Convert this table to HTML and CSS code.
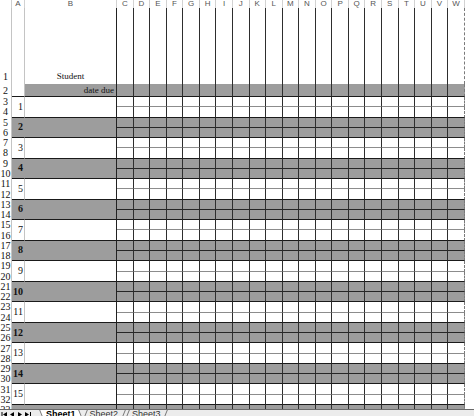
FILE: index.html
```html
<!DOCTYPE html>
<html lang="en">
<head>
<meta charset="utf-8">
<title>Gradebook</title>
<link rel="stylesheet" href="styles.css">
</head>
<body>
<div class="app">
  <div class="sheet" id="sheet"></div>
  <div class="tabbar">
    <div class="nav">
      <svg width="34" height="7" viewBox="0 0 34 7">
        <path d="M1 1v5" stroke="#000" stroke-width="1"/>
        <path d="M6 1 2 3.5 6 6z" fill="#000"/>
        <path d="M13 1 9 3.5 13 6z" fill="#000"/>
        <path d="M17 1 21 3.5 17 6z" fill="#000"/>
        <path d="M24 1 28 3.5 24 6z" fill="#000"/>
        <path d="M29.5 1v5" stroke="#000" stroke-width="1"/>
      </svg>
    </div>
    <div class="tab tab-active">Sheet1</div>
    <div class="tab">Sheet2</div>
    <div class="tab">Sheet3</div>
  </div>
</div>
<script src="script.js"></script>
</body>
</html>
```
FILE: styles.css
```css
* { box-sizing: border-box; margin: 0; padding: 0; }
html, body { width: 474px; height: 416px; overflow: hidden; background: #fff; }
.app { display: flex; flex-direction: column; height: 416px; }

.sheet {
  display: grid;
  grid-template-columns: 12px 13px 92px repeat(21, 16.571px) 1fr;
  grid-template-rows: 8px 76px 13px repeat(30, 10.267px) 10px 10px;
  height: 409px;
  overflow: hidden;
  flex: none;
}

.corner { border-right: 1px solid #cfcfcf; }
.ch {
  font: 8px/8px "Liberation Sans", Arial, sans-serif;
  color: #555;
  text-align: center;
  border-right: 1px solid #d2d2d2;
  overflow: hidden;
}
.ch-x { border-right: none; }

.rh {
  display: flex;
  align-items: center;
  justify-content: center;
  font: 10px/1 "Liberation Serif", "Times New Roman", serif;
  color: #111;
  border-right: 1px solid #c4c4c4;
  overflow: hidden;
  white-space: nowrap;
}
.rh-tall { align-items: flex-end; padding-bottom: 2px; }

.a { border-right: 1px solid #c4c4c4; }
.a-due { border-bottom: 1px solid #1a1a1a; }

.b {
  border-right: 1px solid #222;
  font: 9px/1 "Liberation Serif", "Times New Roman", serif;
  color: #111;
  display: flex;
  white-space: nowrap;
}
.b-top { align-items: flex-end; justify-content: center; padding-bottom: 3px; }
.b-due {
  background: #9d9d9d;
  border-bottom: 1px solid #1a1a1a;
  align-items: center;
  justify-content: flex-end;
  padding-right: 2px;
}

.g { border-right: 1px solid #2e2e2e; }
.g-last { border-right: 1px dashed #7a7a7a; }
.g-due { background: #9d9d9d; border-bottom: 1px solid #1a1a1a; }
.g-mid { border-bottom: 1px solid #8c8c8c; }
.g-end { border-bottom: 1px solid #1a1a1a; }
.g-mid.gray { border-bottom-color: #262626; }
.gray { background: #9d9d9d; }

.grp {
  grid-row: span 2;
  border-bottom: 1px solid #1a1a1a;
  display: flex;
  align-items: center;
  font: 10px/1 "Liberation Serif", "Times New Roman", serif;
  color: #111;
}
.a.grp { justify-content: flex-end; padding-right: 1px; }
.grp.gray { font-weight: bold; }
.a.grp.gray { border-right-color: #9d9d9d; }
.b.grp { border-right-color: #222; }

.tabbar {
  flex: 1;
  display: flex;
  align-items: flex-start;
  background: #ececec;
  border-top: 1px solid #6a6a6a;
  font: 9px/1 "Liberation Sans", Arial, sans-serif;
  gap: 4px;
  padding-left: 1px;
}
.nav { width: 36px; padding-top: 1px; display: flex; }
.tab {
  position: relative;
  padding: 0 5px;
  color: #333;
  z-index: 0;
}
.tab::before {
  content: "";
  position: absolute;
  inset: 0;
  border-left: 1px solid #777;
  border-right: 1px solid #777;
  transform: skewX(-22deg);
  z-index: -1;
}
.tab-active { font-weight: bold; color: #000; }
.tab-active::before { background: #fff; transform: skewX(22deg); }
```
FILE: script.js
```js
var sheet = document.getElementById('sheet');
var cols = 'ABCDEFGHIJKLMNOPQRSTUVW'.split('');

function cell(cls, text) {
  var d = document.createElement('div');
  d.className = cls;
  if (text !== undefined) d.textContent = text;
  sheet.appendChild(d);
  return d;
}

function gridCells(cls) {
  for (var i = 0; i < 21; i++) {
    cell('g ' + cls + (i === 20 ? ' g-last' : ''));
  }
}

cell('corner');
cols.forEach(function (c) { cell('ch', c); });
cell('ch ch-x');

cell('rh rh-tall', '1');
cell('a');
cell('b b-top', 'Student');
gridCells('g-top');
cell('x');

cell('rh', '2');
cell('a a-due');
cell('b b-due', 'date due');
gridCells('g-due');
cell('x');

for (var r = 3; r <= 34; r++) {
  var group = (r - 1) >> 1;
  var gray = group % 2 === 0;
  var first = r % 2 === 1;
  cell('rh', String(r));
  if (first) {
    cell('a grp' + (gray ? ' gray' : ''), String(group));
    cell('b grp' + (gray ? ' gray' : ''));
  }
  gridCells((first ? 'g-mid' : 'g-end') + (gray ? ' gray' : ''));
  cell('x');
}
```
